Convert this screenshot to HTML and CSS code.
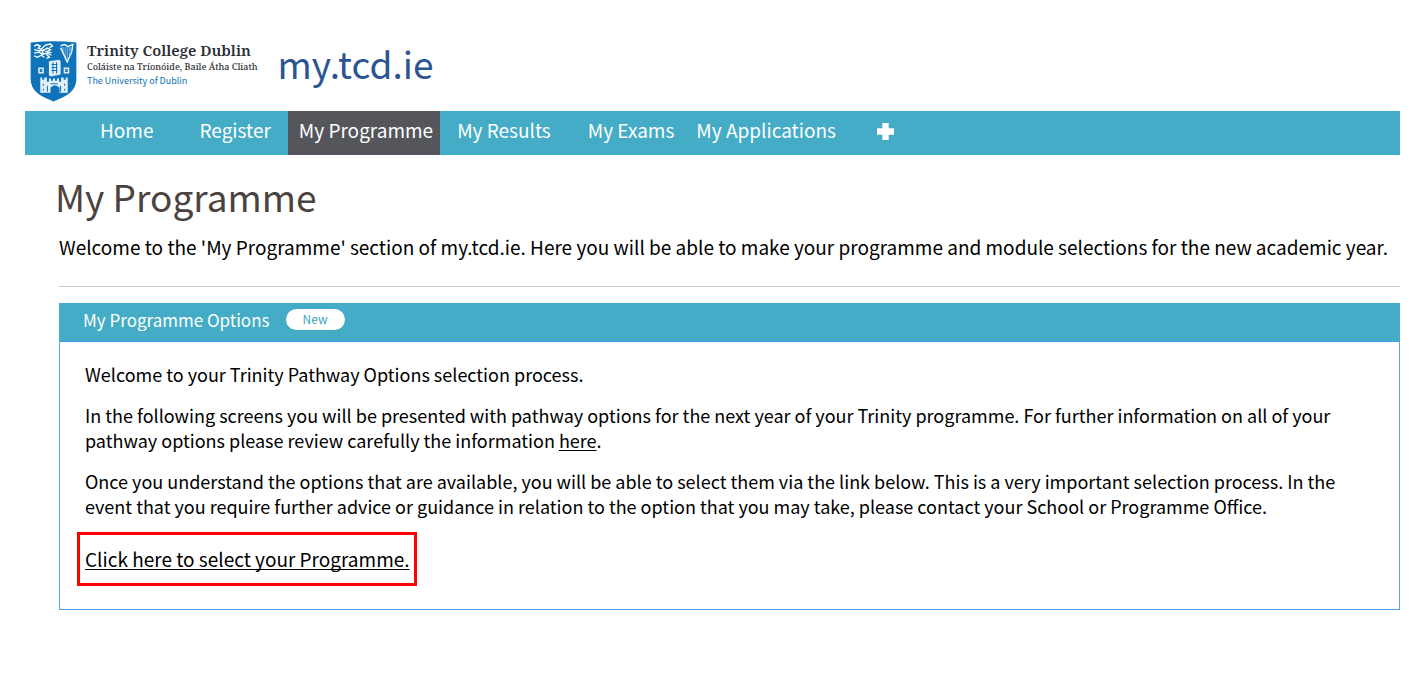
FILE: index.html
```html
<!DOCTYPE html>
<html lang="en">
<head>
<meta charset="utf-8">
<meta name="viewport" content="width=device-width, initial-scale=1">
<title>My Programme - my.tcd.ie</title>
<link rel="stylesheet" href="styles.css">
</head>
<body>
<header class="masthead">
  <svg class="crest" viewBox="0 0 46 60" aria-hidden="true">
    <path class="crest-field" d="M0.500 1.500Q23 -1 45.500 1.500V37C45.500 49 37 54 23 59.500C9 54 0.500 49 0.500 37Z"/>
    <g class="crest-line">
      <path d="M4 5l3-1.500 3 1.500-2 2 3 1 4-4 5-1 2 2-3 1.500M4 8.500l4 1h5l4-2.500 3 1.500-4 2 5 1M4 12l5-1 3 2 5-1 4 2M7 16l4-2 3 2M13 8l-1 5M4 14.500l4 2M16 13l3 3-3 1"/>
      <path d="M30 4.500l4-1 3 2 5-2-1 7-4.500 10-6.500-14"/>
    </g>
    <path class="crest-strings" d="M32.500 6v7M34.500 6v10M36.500 6v12M38.500 6v8M40 6v4M34 18l4 2"/>
    <g class="crest-solid">
      <path d="M18.500 20l10-1.500 1.500 1.500v13l-10 2-1.500-1.500Z"/>
      <path d="M8 26h5.500v6H8ZM33 26h5.500v6H33Z"/>
      <path d="M10 36h2v2h2v-2h2.500v4h2v-3h2v2h2v-2h2v2h2v-2h2v3h2v-4h2.500v2h2v-2h2v15h-8v-5q-5-5-9 0v5H10Z"/>
    </g>
    <path class="crest-detail" d="M21 23h6M21 26h6M21 29h6M22.500 21v11M26 21v11M10 28h1.500v2H10zM35 28h1.500v2H35zM13 42v2M13 47v2M34 42v2M34 47v2M20 42h7M17 44v6M30 44v6"/>
  </svg>
  <div class="college">
    <strong class="college-name">Trinity College Dublin</strong>
    <span class="college-irish" lang="ga">Coláiste na Tríonóide, Baile Átha Cliath</span>
    <span class="college-sub">The University of Dublin</span>
  </div>
  <span class="site-name">my.tcd.ie</span>
</header>
<nav class="nav" aria-label="Main">
  <a class="nav-link nav-home" href="#">Home</a>
  <a class="nav-link nav-register" href="#">Register</a>
  <a class="nav-link nav-current" href="#" aria-current="page">My Programme</a>
  <a class="nav-link" href="#">My Results</a>
  <a class="nav-link nav-exams" href="#">My Exams</a>
  <a class="nav-link" href="#">My Applications</a>
  <button class="nav-more" type="button" aria-label="More">
    <svg class="plus" viewBox="0 0 16 16" aria-hidden="true"><path d="M5 0h6v5h5v6h-5v5H5v-5H0V5h5z"/></svg>
  </button>
</nav>
<main class="main">
  <h1 class="title">My Programme</h1>
  <p class="intro">Welcome to the 'My Programme' section of my.tcd.ie. Here you will be able to make your programme and module selections for the new academic year.</p>
  <section class="panel" aria-labelledby="options-title">
    <div class="panel-head">
      <h2 class="panel-title" id="options-title">My Programme Options</h2>
      <span class="badge">New</span>
    </div>
    <div class="panel-body">
      <p class="para">Welcome to your Trinity Pathway Options selection process.</p>
      <p class="para">In the following screens you will be presented with pathway options for the next year of your Trinity programme. For further information on all of your pathway options please review carefully the information <a class="link" href="#">here</a>.</p>
      <p class="para">Once you understand the options that are available, you will be able to select them via the link below. This is a very important selection process. In the event that you require further advice or guidance in relation to the option that you may take, please contact your School or Programme Office.</p>
      <div class="callout"><a class="link" href="#">Click here to select your Programme.</a></div>
    </div>
  </section>
</main>
</body>
</html>
```
FILE: styles.css
```css
* { box-sizing: border-box; }
body {
  margin: 0;
  padding: 40px 18px 40px 25px;
  background: #fff;
  color: #000;
  font-family: "Noto Sans CJK SC", "Noto Sans", sans-serif;
  font-size: 19px;
  line-height: 25px;
}
.masthead { display: flex; align-items: flex-start; padding-left: 5px; height: 71px; }
.crest { width: 47px; height: 61px; flex: none; margin-top: 1px; }
.crest-field { fill: #0e73b9; }
.crest-line { fill: none; stroke: #fff; stroke-width: 1.3; }
.crest-strings { fill: none; stroke: #b5d8ef; stroke-width: 0.7; }
.crest-solid { fill: #e3f0fa; }
.crest-detail { fill: none; stroke: #0e73b9; stroke-width: 1; }
.college { display: flex; flex-direction: column; margin-left: 10px; white-space: nowrap; }
.college-name { font: 600 15px/20px "Noto Serif", "Noto Serif CJK SC", "Liberation Serif", serif; color: #2b2d35; }
.college-irish { font: 500 9px/13px "Noto Serif", "Noto Serif CJK SC", "Liberation Serif", serif; color: #2b2d35; }
.college-sub { font-size: 9px; line-height: 16px; color: #0e73b9; }
.site-name { margin-left: 20px; font-size: 37px; line-height: 46px; color: #2b5592; }
.nav { display: flex; background: #44acc6; min-height: 44px; }
.nav-link { padding: 0 9px 7px; color: #fff; font-size: 19px; line-height: 37px; text-decoration: none; white-space: nowrap; }
.nav-home { margin-left: 66px; }
.nav-register { margin-left: 28px; }
.nav-current { margin: 0 8px; padding: 0 7px 7px 11px; background: #54565b; }
.nav-exams { margin: 0 4px 0 19px; }
.nav-more { margin-left: 32px; padding: 0; width: 17px; height: 40px; border: 0; background: none; }
.plus { display: block; width: 17px; height: 17px; fill: #fff; }
.main { padding-left: 34px; }
.title { margin: 15px 0 0 -4px; font-size: 37px; line-height: 52px; font-weight: 400; color: #4b4341; }
.intro { margin: 12px 0 0; padding-bottom: 27px; border-bottom: 1px solid #ccc; }
.panel { margin-top: 16px; border: 1px solid #4aa6f2; }
.panel-head { display: flex; align-items: center; gap: 16px; min-height: 39px; margin: -1px -1px 0; padding: 0 24px 6px; background: #44acc6; border-bottom: 1px solid #3da0e8; }
.panel-title { margin: 0; color: #fff; font-size: 17px; line-height: 25px; font-weight: 400; }
.badge { padding: 0 17px 1px; border-radius: 11px; background: #fff; color: #3fa5c0; font-size: 12px; line-height: 20px; }
.panel-body { padding: 20px 16px 23px 25px; font-size: 18px; }
.para { margin: 0; }
.para + .para { margin-top: 16px; }
.link { color: #000; text-decoration: underline; text-underline-offset: 2px; text-decoration-skip-ink: none; text-decoration-thickness: 1px; }
.callout { width: fit-content; margin: 13px 0 0 -8px; padding: 11px 4px 12px 5px; border: 3px solid #f00; font-size: 19px; }
```
